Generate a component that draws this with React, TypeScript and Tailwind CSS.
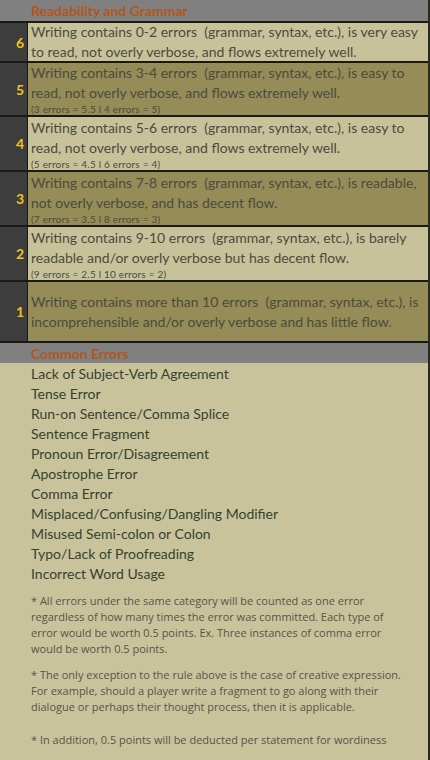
import React from 'react';

const rows = [
  { n: '6', lines: ['Writing contains 0-2 errors  (grammar, syntax, etc.), is very easy', 'to read, not overly verbose, and flows extremely well.'], note: '', light: true, h: 'h-[40px]' },
  { n: '5', lines: ['Writing contains 3-4 errors  (grammar, syntax, etc.), is easy to', 'read, not overly verbose, and flows extremely well.'], note: '(3 errors = 5.5 l 4 errors = 5)', light: false, h: 'h-[54px]' },
  { n: '4', lines: ['Writing contains 5-6 errors  (grammar, syntax, etc.), is easy to', 'read, not overly verbose, and flows extremely well.'], note: '(5 errors = 4.5 l 6 errors = 4)', light: true, h: 'h-[55px]' },
  { n: '3', lines: ['Writing contains 7-8 errors  (grammar, syntax, etc.), is readable,', 'not overly verbose, and has decent flow.'], note: '(7 errors = 3.5 l 8 errors = 3)', light: false, h: 'h-[55px]' },
  { n: '2', lines: ['Writing contains 9-10 errors  (grammar, syntax, etc.), is barely', 'readable and/or overly verbose but has decent flow.'], note: '(9 errors = 2.5 l 10 errors = 2)', light: true, h: 'h-[55px]' },
  { n: '1', lines: ['Writing contains more than 10 errors  (grammar, syntax, etc.), is', 'incomprehensible and/or overly verbose and has little flow.'], note: '', light: false, h: 'h-[61px]' },
];

const errors = [
  'Lack of Subject-Verb Agreement',
  'Tense Error',
  'Run-on Sentence/Comma Splice',
  'Sentence Fragment',
  'Pronoun Error/Disagreement',
  'Apostrophe Error',
  'Comma Error',
  'Misplaced/Confusing/Dangling Modifier',
  'Misused Semi-colon or Colon',
  'Typo/Lack of Proofreading',
  'Incorrect Word Usage',
];

export default function App() {
  return (
    <div className="w-[430px] h-[760px] overflow-hidden bg-[#c9c39c] border-r-2 border-[#2b2a20] font-['Lato',sans-serif]">
      {/* Readability header */}
      <div className="h-[23px] bg-[#808080] pl-[31px] flex items-center border-b-2 border-[#1a1a14]">
        <span className="text-[14px] font-bold text-[#b2561d]">Readability and Grammar</span>
      </div>

      {rows.map((r) => (
        <div key={r.n} className={`flex ${r.h} border-b-2 border-[#1a1a14]`}>
          <div className="w-[28px] shrink-0 bg-[#3d3d3d] border-r border-[#1a1a14] flex items-center justify-end pr-[3px]">
            <span className="text-[14px] font-bold text-[#f0c21c]">{r.n}</span>
          </div>
          <div className={`flex-1 pl-[3px] flex flex-col justify-center text-[#4b4b3e] ${r.light ? 'bg-[#c8c29a]' : 'bg-[#958c57]'}`}>
            {r.lines.map((l) => (
              <div key={l} className="text-[14px] leading-[20px] whitespace-pre">{l}</div>
            ))}
            {r.note && <div className="text-[10px] leading-[12px] tracking-[0.2px] whitespace-nowrap">{r.note}</div>}
          </div>
        </div>
      ))}

      {/* Common errors header */}
      <div className="h-[20px] bg-[#808080] pl-[31px] flex items-center">
        <span className="text-[14px] font-bold text-[#b2561d]">Common Errors</span>
      </div>

      <div className="pl-[31px] pt-[1px] text-[#35422f]">
        {errors.map((e) => (
          <div key={e} className="text-[14px] leading-[20px]">{e}</div>
        ))}
      </div>

      <div className="pl-[31px] pr-[2px] font-['Open_Sans',sans-serif] text-[11px] leading-[16px] text-[#555548]">
        <p className="mt-[9px]">* All errors under the same category will be counted as one error<br />regardless of how many times the error was committed. Each type of<br />error would be worth 0.5 points. Ex. Three instances of comma error<br />would be worth 0.5 points.</p>
        <p className="mt-[10px]">* The only exception to the rule above is the case of creative expression.<br />For example, should a player write a fragment to go along with their<br />dialogue or perhaps their thought process, then it is applicable.</p>
        <p className="mt-[17px]">* In addition, 0.5 points will be deducted per statement for wordiness</p>
      </div>
    </div>
  );
}
